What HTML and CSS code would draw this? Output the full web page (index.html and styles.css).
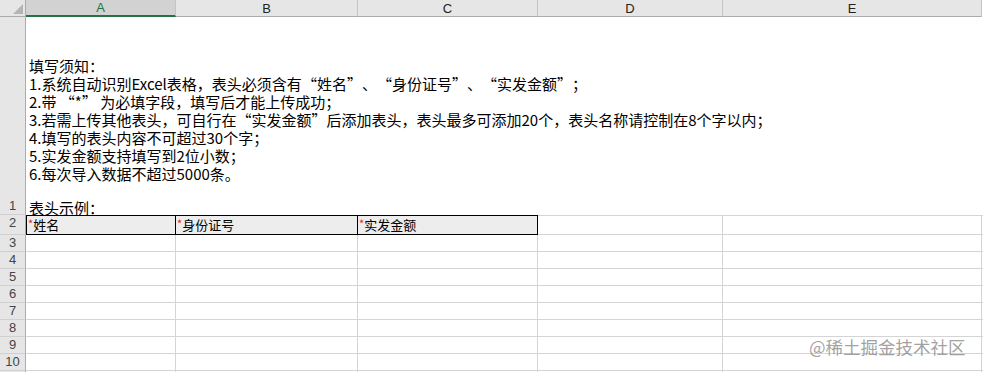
FILE: index.html
```html
<!DOCTYPE html>
<html lang="zh-CN">

<head>
    <meta charset="UTF-8">
    <meta name="viewport" content="width=device-width, initial-scale=1.0">
    <title>导入模板</title>
    <link rel="stylesheet" href="styles.css">
</head>

<body>
    <div class="sheet">
        <div class="corner">
            <svg width="26" height="17" viewBox="0 0 26 17">
                <polygon points="23,4 23,14 13,14" fill="#b4b4b4" />
            </svg>
        </div>
        <div class="col-head active">A</div>
        <div class="col-head">B</div>
        <div class="col-head">C</div>
        <div class="col-head">D</div>
        <div class="col-head">E</div>
        <div class="col-head end"></div>

        <div class="row-head tall">1</div>
        <div class="notes">
            <div class="line">填写须知：</div>
            <div class="line">1.系统自动识别Excel表格，表头必须含有<span class="qo">“</span>姓名<span class="qc">”</span>、<span class="qo">“</span>身份证号<span class="qc">”</span>、<span class="qo">“</span>实发金额<span class="qc">”</span>；</div>
            <div class="line">2.带 <span class="qo">“</span>*<span class="qc">”</span> 为必填字段，填写后才能上传成功；</div>
            <div class="line">3.若需上传其他表头，可自行在<span class="qo">“</span>实发金额<span class="qc">”</span>后添加表头，表头最多可添加20个，表头名称请控制在8个字以内；</div>
            <div class="line">4.填写的表头内容不可超过30个字；</div>
            <div class="line">5.实发金额支持填写到2位小数；</div>
            <div class="line">6.每次导入数据不超过5000条。</div>
            <div class="line"></div>
            <div class="line last">表头示例：</div>
        </div>

        <div class="row-head">2</div>
        <div class="cell head-cell first"><span class="req">*</span>姓名</div>
        <div class="cell head-cell"><span class="req">*</span>身份证号</div>
        <div class="cell head-cell"><span class="req">*</span>实发金额</div>
        <div class="cell top"></div>
        <div class="cell top"></div>
        <div class="cell top end"></div>

        <div class="row-head">3</div>
        <div class="cell"></div><div class="cell"></div><div class="cell"></div><div class="cell"></div><div class="cell"></div><div class="cell end"></div>
        <div class="row-head">4</div>
        <div class="cell"></div><div class="cell"></div><div class="cell"></div><div class="cell"></div><div class="cell"></div><div class="cell end"></div>
        <div class="row-head">5</div>
        <div class="cell"></div><div class="cell"></div><div class="cell"></div><div class="cell"></div><div class="cell"></div><div class="cell end"></div>
        <div class="row-head">6</div>
        <div class="cell"></div><div class="cell"></div><div class="cell"></div><div class="cell"></div><div class="cell"></div><div class="cell end"></div>
        <div class="row-head">7</div>
        <div class="cell"></div><div class="cell"></div><div class="cell"></div><div class="cell"></div><div class="cell"></div><div class="cell end"></div>
        <div class="row-head">8</div>
        <div class="cell"></div><div class="cell"></div><div class="cell"></div><div class="cell"></div><div class="cell"></div><div class="cell end"></div>
        <div class="row-head">9</div>
        <div class="cell"></div><div class="cell"></div><div class="cell"></div><div class="cell"></div><div class="cell"></div><div class="cell end"></div>
        <div class="row-head">10</div>
        <div class="cell"></div><div class="cell"></div><div class="cell"></div><div class="cell"></div><div class="cell"></div><div class="cell end"></div>
        <div class="row-head"></div>
        <div class="cell"></div><div class="cell"></div><div class="cell"></div><div class="cell"></div><div class="cell"></div><div class="cell end"></div>
    </div>

    <div class="watermark">@稀土掘金技术社区</div>
</body>

</html>
```

FILE: styles.css
```css
body {
    margin: 0;
    padding: 0;
    background: #fff;
    font-family: "Noto Sans CJK SC", "Liberation Sans", sans-serif;
    color: #000;
    overflow: hidden;
}

.sheet {
    display: grid;
    grid-template-columns: 26px 150px 182px 180px 185px 259px 1px;
    grid-template-rows: 17px 198px 20px repeat(9, 17px);
}

.sheet > div {
    box-sizing: border-box;
}

.corner {
    background: #e6e6e6;
    border-right: 1px solid #ababab;
    border-bottom: 1px solid #ababab;
}

.corner svg {
    display: block;
}

.col-head {
    background: #e6e6e6;
    border-right: 1px solid #c4c4c4;
    border-bottom: 1px solid #ababab;
    font-family: "Liberation Sans", sans-serif;
    font-size: 13px;
    color: #222;
    text-align: center;
    line-height: 17px;
}

.col-head.active {
    background: #d2d2d2;
    color: #217346;
    border-bottom: 2px solid #217346;
    line-height: 16px;
}

.col-head.end {
    background: #fff;
    border: none;
}

.row-head {
    background: #e6e6e6;
    border-right: 1px solid #ababab;
    border-bottom: 1px solid #d0d0d0;
    font-family: "Liberation Sans", sans-serif;
    font-size: 13px;
    color: #444;
    text-align: center;
    line-height: 16px;
}

.row-head.tall {
    display: flex;
    align-items: flex-end;
    justify-content: center;
}

.notes {
    grid-column: 2 / -1;
    display: flex;
    flex-direction: column;
    justify-content: flex-end;
    padding-left: 3px;
    font-size: 15px;
    white-space: nowrap;
}

.notes .line {
    height: 18px;
    line-height: 18px;
}

.notes .line.last {
    height: 14px;
    line-height: 14px;
}

/* full-width quotes, as in SimSun */
.qo,
.qc {
    display: inline-block;
    width: 1em;
}

.qo {
    text-align: right;
}

.qc {
    text-align: left;
}

.cell {
    border-right: 1px solid #d4d4d4;
    border-bottom: 1px solid #d4d4d4;
}

.cell.end {
    border-right: none;
}

.cell.top {
    border-top: 1px solid #d4d4d4;
}

.head-cell {
    background: #ededed;
    border-top: 1px solid #000;
    border-right: 1px solid #000;
    border-bottom: 1px solid #000;
    font-size: 13px;
    line-height: 18px;
    padding-left: 1px;
    white-space: nowrap;
}

.head-cell.first {
    border-left: 1px solid #000;
}

.req {
    color: #e02020;
    font-size: 11px;
    vertical-align: top;
    line-height: 14px;
}

.watermark {
    position: absolute;
    left: 809px;
    top: 336px;
    font-size: 17.5px;
    line-height: 22px;
    color: rgba(120, 120, 120, 0.7);
    white-space: nowrap;
}
```
